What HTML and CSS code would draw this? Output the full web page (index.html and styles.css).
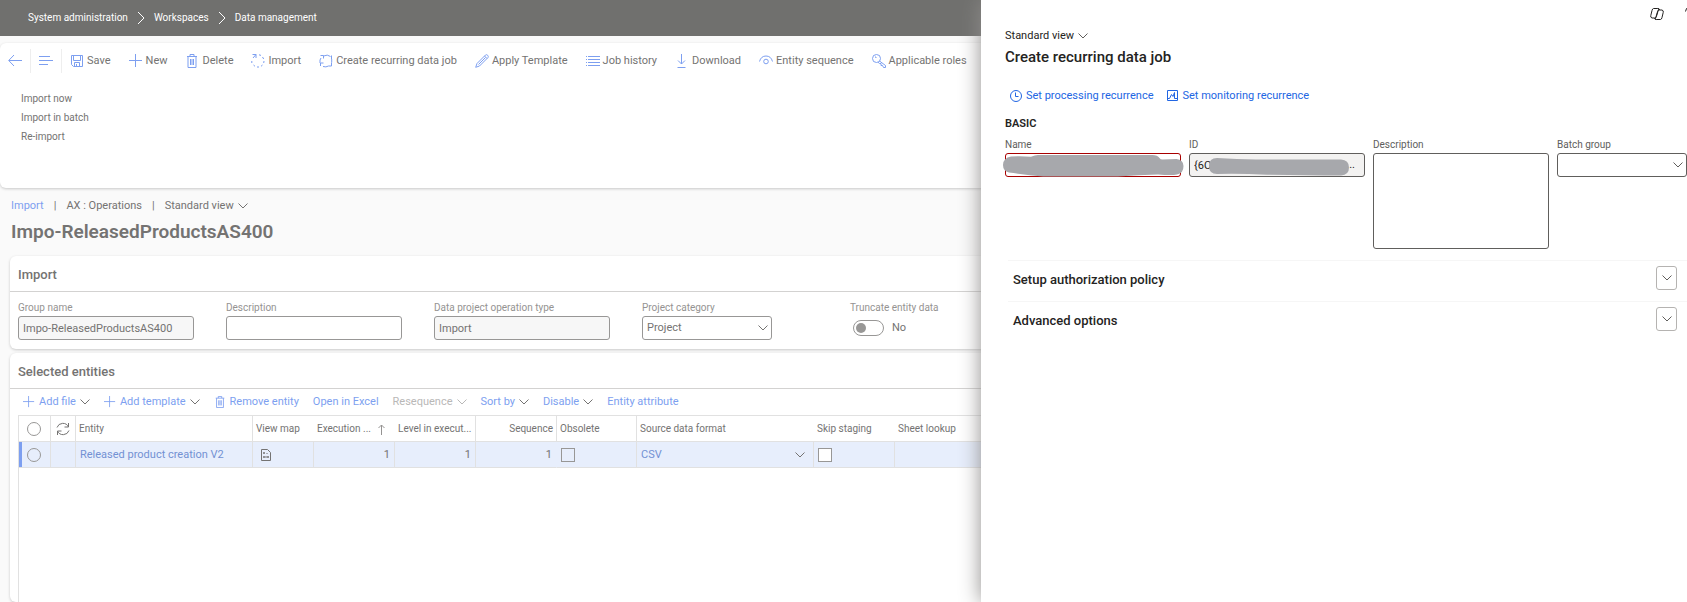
FILE: index.html
```html
<!DOCTYPE html>
<html lang="en">
  <head>
    <meta charset="utf-8">
    <title>Data management</title>
    <link rel="stylesheet" href="styles.css">
  </head>
  <body>
    <svg class="sprite" aria-hidden="true">
      <symbol id="chevron" viewBox="0 0 10 6"><path d="M.5.5 5 5 9.5.5"/></symbol>
      <symbol id="crumb" viewBox="0 0 8 14"><path d="M1 1l6 6-6 6"/></symbol>
      <symbol id="plus" viewBox="0 0 14 14"><path d="M6.500 0v13M0 6.500h13"/></symbol>
      <symbol id="trash" viewBox="0 0 14 14"><path d="M2 2.500h10M5 2.500v-2h4v2M3 2.500v11h8v-11M5.500 5v6M7 5v6M8.500 5v6"/></symbol>
    </svg>

    <header class="topbar">
      <nav class="crumbs" aria-label="Breadcrumb">
        <a href="#">System administration</a>
        <svg class="crumb"><use href="#crumb"/></svg>
        <a href="#">Workspaces</a>
        <svg class="crumb"><use href="#crumb"/></svg>
        <a href="#">Data management</a>
      </nav>
    </header>

    <main>
      <section class="ribbon">
        <div class="actions">
          <button class="square" aria-label="Back"><svg class="icon" viewBox="0 0 14 14"><path d="M6 1 .7 6.500 6 12M1 6.500h13"/></svg></button>
          <button class="square" aria-label="Show list"><svg class="icon" viewBox="0 0 14 14"><path d="M0 2.500h11M0 6.500h14M0 10.500h9"/></svg></button>
          <button><svg class="icon" viewBox="0 0 14 14"><path d="M1.500 1.500h11v11h-9l-2-2zM3.500 1.500v5h7v-5M4.500 12.500v-4h5v4M6.500 10v2"/></svg>Save</button>
          <button><svg class="icon"><use href="#plus"/></svg>New</button>
          <button><svg class="icon"><use href="#trash"/></svg>Delete</button>
          <button><svg class="icon" viewBox="0 0 14 14"><path d="M1.500.5h3.500v3.500M5 .5 2 4M8 .8l2 .6M11.500 3l1.200 2M13 7l-.3 2M11.500 11l-1.500 1.300M8 13H6M4 12.300 2.500 11M.8 9V7"/></svg>Import</button>
          <button><svg class="icon" viewBox="0 0 14 14"><path d="M1.500 1.500h3v3M4.500 2Q8.500 0 11.500 2.500M12.500 5V1.500M12.500 8.500v3.500H9.500M12.700 5v3.500M9.500 12Q7 13.500 4 12.500M1.500 12V9h3M1 9V6l1-2"/></svg>Create recurring data job</button>
          <button><svg class="icon" viewBox="0 0 14 14"><path d="M.7 13.300 2 9.500 10.500 1q1.200-.8 2.200.3t.3 2.200L4.500 12zM9.500 2l2.500 2.500M3.500 10.500l7-7"/></svg>Apply Template</button>
          <button><svg class="icon" viewBox="0 0 14 14"><path d="M0 2.500h1M0 5.500h1M0 8.500h1M0 11.500h1M2 2.500h12M2 5.500h12M2 8.500h12M2 11.500h12"/></svg>Job history</button>
          <button><svg class="icon" viewBox="0 0 14 14"><path d="M6.500 0v10M3 6.500l3.500 3.500L10 6.500M2.500 13.500h8"/></svg>Download</button>
          <button><svg class="icon" viewBox="0 0 14 14"><path d="M.5 7.500Q2 2 7 2t6.500 5.500"/><circle cx="7" cy="7.500" r="2.300"/></svg>Entity sequence</button>
          <button><svg class="icon" viewBox="0 0 14 14"><circle cx="4.500" cy="4.500" r="4"/><path d="M3 3h1v1M7.500 7l6 4.500v2h-2l-1-2H9v-2H7.500L6 8.200"/></svg>Applicable roles</button>
          <button aria-label="More"><svg class="icon" viewBox="0 0 14 14"><circle cx="7" cy="5" r="6"/></svg></button>
        </div>
        <div class="submenu">
          <button>Import now</button>
          <button>Import in batch</button>
          <button>Re-import</button>
        </div>
      </section>

      <div class="context">
        <a href="#">Import</a><span>|</span>AX : Operations<span>|</span>
        <button class="view">Standard view <svg class="chevron"><use href="#chevron"/></svg></button>
      </div>
      <h1>Impo-ReleasedProductsAS400</h1>

      <section class="panel">
        <h2>Import</h2>
        <div class="fields">
          <div class="field">
            <label for="group">Group name</label>
            <input id="group" value="Impo-ReleasedProductsAS400" readonly>
          </div>
          <div class="field">
            <label for="desc">Description</label>
            <input id="desc">
          </div>
          <div class="field">
            <label for="type">Data project operation type</label>
            <input id="type" value="Import" readonly>
          </div>
          <div class="field">
            <label for="category">Project category</label>
            <div class="stack combo">
              <select id="category"><option>Project</option></select>
              <svg class="chevron"><use href="#chevron"/></svg>
            </div>
          </div>
          <div class="field">
            <label for="truncate">Truncate entity data</label>
            <div class="switch"><input id="truncate" type="checkbox" role="switch">No</div>
          </div>
        </div>
      </section>

      <section class="panel entities">
        <h2>Selected entities</h2>
        <div class="toolbar">
          <button><svg class="icon"><use href="#plus"/></svg>Add file <svg class="chevron"><use href="#chevron"/></svg></button>
          <button><svg class="icon"><use href="#plus"/></svg>Add template <svg class="chevron"><use href="#chevron"/></svg></button>
          <button><svg class="icon"><use href="#trash"/></svg>Remove entity</button>
          <button>Open in Excel</button>
          <button disabled>Resequence <svg class="chevron"><use href="#chevron"/></svg></button>
          <button>Sort by <svg class="chevron"><use href="#chevron"/></svg></button>
          <button>Disable <svg class="chevron"><use href="#chevron"/></svg></button>
          <button>Entity attribute</button>
        </div>
        <div class="grid">
          <table>
            <colgroup>
              <col class="c-pick"><col class="c-sync"><col class="c-wide"><col class="c-map"><col class="c-num"><col class="c-num"><col class="c-num"><col class="c-flag"><col class="c-wide"><col class="c-num"><col>
            </colgroup>
            <thead>
              <tr>
                <th class="line"><input type="checkbox" class="round" aria-label="Select all"></th>
                <th class="line"><svg class="sync" viewBox="0 0 14 14"><path d="M1 5.500a6.200 6.200 0 0 1 11.500-.5M12.500 1v4h-4M13 8.500a6.200 6.200 0 0 1-11.500.5M1.500 13V9h4"/></svg></th>
                <th class="line">Entity</th>
                <th>View map</th>
                <th><span class="sorted">Execution ...<svg class="up" viewBox="0 0 7 11"><path d="M3.500 11V1M.5 4l3-3 3 3"/></svg></span></th>
                <th class="line">Level in execut...</th>
                <th class="line num">Sequence</th>
                <th class="line">Obsolete</th>
                <th>Source data format</th>
                <th>Skip staging</th>
                <th>Sheet lookup</th>
              </tr>
            </thead>
            <tbody>
              <tr>
                <td class="picked"><input type="checkbox" class="round" aria-label="Select row"></td>
                <td></td>
                <td><a href="#">Released product creation V2</a></td>
                <td><svg class="map" viewBox="0 0 10 12"><path d="M.5.500h6l3 3v8h-9zM2 4h2M3 3v2M2 8h6M3 7v2M7 7v2M6 4v1"/></svg></td>
                <td class="num">1</td>
                <td class="num">1</td>
                <td class="num plain">1</td>
                <td><input type="checkbox" class="box" aria-label="Obsolete" disabled></td>
                <td><span class="format">CSV<svg class="chevron"><use href="#chevron"/></svg></span></td>
                <td><input type="checkbox" class="box" aria-label="Skip staging"></td>
                <td class="plain"></td>
              </tr>
            </tbody>
          </table>
        </div>
      </section>
    </main>

    <aside class="dialog" role="dialog" aria-labelledby="dialog-title">
      <div class="dialog-tools">
        <svg class="copilot" viewBox="0 0 14 14"><path d="M3.500 1.500h4.300q1 0 .7 1L6.300 9.800q-.5 1.200-1.500 1.200H2Q.2 10.500.8 8.500l1.200-5Q2.500 1.500 3.500 1.500zM10.500 12.500H6.200q-1 0-.7-1L7.700 4.200Q8.200 3 9.200 3H12q1.800.5 1.200 2.500l-1.200 5q-.5 2-1.500 2zM8 1.500q1.500 0 1.500 1.500M4.500 11q.2 1.500 1.500 1.500"/></svg>
        <svg class="help" viewBox="0 0 9 14"><path d="M.5 4.500q0-4 4-4t4 4-4 4v2"/></svg>
      </div>
      <button class="view">Standard view <svg class="chevron"><use href="#chevron"/></svg></button>
      <h2 id="dialog-title">Create recurring data job</h2>
      <div class="toolbar">
        <button><svg class="icon" viewBox="0 0 14 14"><circle cx="7" cy="7" r="5.500"/><path d="M6.500 3.500V7.500h3"/></svg>Set processing recurrence</button>
        <button><svg class="icon" viewBox="0 0 14 14"><path d="M1.500 1.500h10v10h-10zM2 9.500h1.500l2-4 1.500 2 1.500-4v6h3"/></svg>Set monitoring recurrence</button>
      </div>
      <h3>BASIC</h3>
      <div class="fields">
        <div class="field">
          <label for="name">Name</label>
          <div class="stack">
            <input id="name" class="invalid">
            <svg class="mark" viewBox="0 0 176 24"><path d="M6 3.500Q-2 5-2 12q0 6 6 7.500 18 2.500 34 4h75q20-1.500 40-2 14 1 19 0 6.500-1 6.500-8.500 0-6-7-7l-14 .5q-2 0-3-1.500-2-3-7-3H33q-3 .3-7 1.700-10-.7-20-.2z"/></svg>
          </div>
        </div>
        <div class="field">
          <label for="id">ID</label>
          <div class="stack">
            <input id="id" value="{6C" readonly>
            <span class="more">..</span>
            <svg class="mark" viewBox="0 0 176 24"><path d="M28 5q-8 0-8 8 0 8 8 8 24-.5 50 .7 40 .8 74 .8 8-.5 8-8t-8-8H67Q48 6 28 5z"/></svg>
          </div>
        </div>
        <div class="field">
          <label for="job-desc">Description</label>
          <textarea id="job-desc"></textarea>
        </div>
        <div class="field">
          <label for="batch">Batch group</label>
          <div class="stack combo">
            <select id="batch"><option></option></select>
            <svg class="chevron"><use href="#chevron"/></svg>
          </div>
        </div>
      </div>
      <div class="fold">
        <h4>Setup authorization policy</h4>
        <button aria-label="Expand setup authorization policy"><svg class="chevron"><use href="#chevron"/></svg></button>
      </div>
      <div class="fold">
        <h4>Advanced options</h4>
        <button aria-label="Expand advanced options"><svg class="chevron"><use href="#chevron"/></svg></button>
      </div>
    </aside>
  </body>
</html>
```
FILE: styles.css
```css
:root {
  --page: #fafafa;
  --text: #747372;
  --muted: #959392;
  --border: #989796;
  --link: #7d9ff0;
  --line: #e1e1e1;
}

* {
  box-sizing: border-box;
}

body {
  margin: 0;
  min-height: 100vh;
  display: flex;
  flex-direction: column;
  overflow: hidden;
  background: var(--page);
  color: var(--text);
  font: 11px/16px "Segoe UI", Roboto, sans-serif;
}

h1, h2, h3, h4 {
  margin: 0;
  font-weight: 600;
}

a {
  color: var(--link);
  text-decoration: none;
}

button, input, select, textarea {
  font: inherit;
  color: inherit;
}

button {
  display: flex;
  align-items: center;
  padding: 0;
  border: 0;
  background: none;
  white-space: nowrap;
}

svg {
  fill: none;
  stroke: currentColor;
  flex: none;
}

.sprite {
  position: absolute;
  width: 0;
  height: 0;
}

.icon {
  width: 14px;
  height: 14px;
  color: var(--link);
}

.chevron {
  width: 10px;
  height: 6px;
  color: var(--text);
}

/* Top bar */
.topbar {
  height: 36px;
  padding: 0 28px;
  background: #70706e;
}
.crumbs {
  display: flex;
  align-items: center;
  gap: 9px;
  height: 35px;
  font-size: 10px;
}
  .crumbs a {
    color: #fff;
  }
  .crumb {
    width: 8px;
    height: 14px;
    color: #fff;
  }

main {
  flex: 1;
  display: flex;
  flex-direction: column;
  padding-top: 7px;
}

/* Ribbon */
.ribbon {
  height: 145px;
  flex: none;
  background: #fff;
  border-radius: 6px;
  box-shadow: 0 1px 3px #0003;
}
.actions {
  display: flex;
  align-items: center;
  gap: 18px;
  height: 36px;
}
  .actions button {
    gap: 3px;
    height: 24px;
  }
  .actions .square {
    padding: 0 8px;
    margin-right: -18px;
    border-right: 1px solid #eee;
  }
  .actions .square + .square {
    margin-right: -10px;
  }
.submenu {
  display: flex;
  flex-direction: column;
  gap: 3px;
  padding: 12px 21px;
  font-size: 10px;
}

/* Page heading */
.context {
  display: flex;
  align-items: center;
  gap: 10px;
  padding: 10px 11px 0;
}
.view {
  gap: 4px;
}
h1 {
  padding: 4px 11px 10px;
  font-size: 19px;
  line-height: 28px;
}

/* Panels */
.panel {
  margin-left: 10px;
  margin-bottom: 4px;
  padding-bottom: 9px;
  background: #fff;
  border-radius: 6px 0 0 6px;
  box-shadow: 0 1px 3px #0003;
}
  .panel h2 {
    padding: 9px 8px 6px;
    border-bottom: 1px solid #d3d2d1;
    font-size: 13px;
    font-weight: 500;
    line-height: 20px;
  }
.entities {
  flex: 1;
  display: flex;
  flex-direction: column;
  margin-bottom: 0;
  padding-bottom: 0;
}

/* Form fields */
.fields {
  display: flex;
  align-items: flex-start;
}
  .panel .fields {
    gap: 32px;
    padding: 8px 8px 0;
  }
.field {
  width: 176px;
  flex: none;
}
  .field label {
    display: block;
    color: var(--muted);
    font-size: 10px;
  }
  .field input, .field select, .field textarea {
    display: block;
    width: 100%;
    height: 24px;
    padding: 0 4px;
    border: 1px solid var(--border);
    border-radius: 3px;
    background: #fff;
    appearance: none;
    resize: none;
  }
  .field input[readonly] {
    background: #f7f7f7;
  }
.stack {
  display: grid;
  align-items: center;
}
  .stack > * {
    grid-area: 1/1/2/2;
  }
.combo {
  width: 130px;
}
  .combo .chevron {
    justify-self: end;
    margin-right: 4px;
  }
.switch {
  display: flex;
  align-items: center;
  gap: 8px;
  height: 24px;
  padding-left: 3px;
}
  .field .switch input {
    display: flex;
    align-items: center;
    width: 31px;
    height: 16px;
    margin: 0;
    padding: 0 2px;
    border-radius: 8px;
  }
  .switch input::before {
    content: "";
    width: 10px;
    height: 10px;
    border-radius: 50%;
    background: var(--border);
  }

/* Command strips */
.toolbar {
  display: flex;
  align-items: center;
  gap: 14px;
}
  .toolbar button {
    gap: 4px;
    color: var(--link);
  }
  .panel .toolbar {
    height: 26px;
    padding: 0 13px;
  }
  .panel .icon {
    width: 12px;
    height: 12px;
  }
  .toolbar button:disabled {
    color: #b9b8b7;
  }
  .toolbar button:disabled .chevron {
    color: #b9b8b7;
  }

/* Entity grid */
.grid {
  flex: 1;
  margin-left: 8px;
  border: solid var(--line);
  border-width: 1px 0 0 1px;
}
table {
  width: 100%;
  table-layout: fixed;
  border-collapse: separate;
  border-spacing: 0;
}
.c-pick { width: 32px }
.c-sync { width: 25px }
.c-wide { width: 177px }
.c-map { width: 61px }
.c-num { width: 81px }
.c-flag { width: 80px }
th, td {
  height: 26px;
  padding: 0 3px;
  border-bottom: 1px solid var(--line);
  text-align: left;
  white-space: nowrap;
}
th {
  padding-top: 1px;
  font-size: 10px;
  font-weight: 400;
}
  th.line, td {
    border-right: 1px solid var(--line);
  }
td {
  padding: 0 4px;
  background: #e7eefc;
}
  td a, .format {
    color: #7391d3;
  }
  td.plain {
    border-right-color: transparent;
  }
  .picked {
    box-shadow: inset 3px 0 var(--link);
  }
  th:first-child, td:first-child {
    padding-left: 8px;
  }
  .num {
    text-align: right;
  }
.sorted, .format {
  display: flex;
  align-items: center;
  justify-content: space-between;
}
  .format .chevron {
    margin-right: 4px;
  }
.round, .box {
  display: block;
  appearance: none;
  width: 14px;
  height: 14px;
  margin: 0;
  border: 1px solid var(--border);
  background: #fff;
}
  .round {
    border-radius: 50%;
    background: none;
  }
  .box:disabled {
    background: none;
  }
.sync, .map, .up {
  display: block;
}
.sync {
  width: 14px;
  height: 14px;
  margin-left: 2px;
}
.map {
  width: 10px;
  height: 12px;
  margin-left: 4px;
}
.up {
  width: 7px;
  height: 11px;
  margin-right: 7px;
  color: var(--muted);
}

/* Slide-out dialog, lies over the page */
.dialog {
  --border: #605e5c;
  --muted: #605e5c;
  --text: #605e5c;
  --link: #2266e3;
  position: absolute;
  inset: 0 0 0 auto;
  width: 706px;
  padding-left: 24px;
  background: #fff;
  color: #242322;
  box-shadow: 0 0 20px #8f8d8b;
}
.dialog-tools {
  display: flex;
  justify-content: flex-end;
  gap: 21px;
  height: 28px;
  padding-top: 7px;
  overflow: hidden;
}
.copilot {
  width: 14px;
  height: 14px;
}
.help {
  width: 9px;
  height: 14px;
  margin-right: -7px;
}
.dialog h2 {
  padding: 3px 0 21px;
  font-size: 15px;
  font-weight: 500;
  line-height: 20px;
}
.dialog .toolbar {
  gap: 12px;
  padding-left: 4px;
}
  .dialog .toolbar button {
    gap: 3px;
  }
.dialog h3 {
  padding: 12px 0 5px;
  font-size: 11px;
  line-height: 16px;
}
.dialog .fields {
  gap: 8px;
  margin-bottom: 11px;
}
  .field .invalid {
    border-color: #a80000;
  }
  .field textarea {
    height: 96px;
  }
  .dialog .field:last-child {
    width: 130px;
  }
  .dialog .field input[readonly] {
    background: #f3f2f1;
  }
.mark {
  width: 176px;
  height: 24px;
  overflow: visible;
  fill: #a7a8ac;
  stroke: none;
}
.more {
  justify-self: end;
  padding-right: 10px;
}
.fold {
  display: flex;
  align-items: center;
  justify-content: space-between;
  height: 41px;
  margin-left: 3px;
  padding: 0 10px 6px 5px;
  border-top: 1px solid #f6f6f6;
}
  .fold h4 {
    padding-top: 4px;
    font-size: 13px;
    font-weight: 500;
  }
  .fold button {
    justify-content: center;
    width: 21px;
    height: 24px;
    border: 1px solid #b5b3b1;
    border-radius: 3px;
  }
```
